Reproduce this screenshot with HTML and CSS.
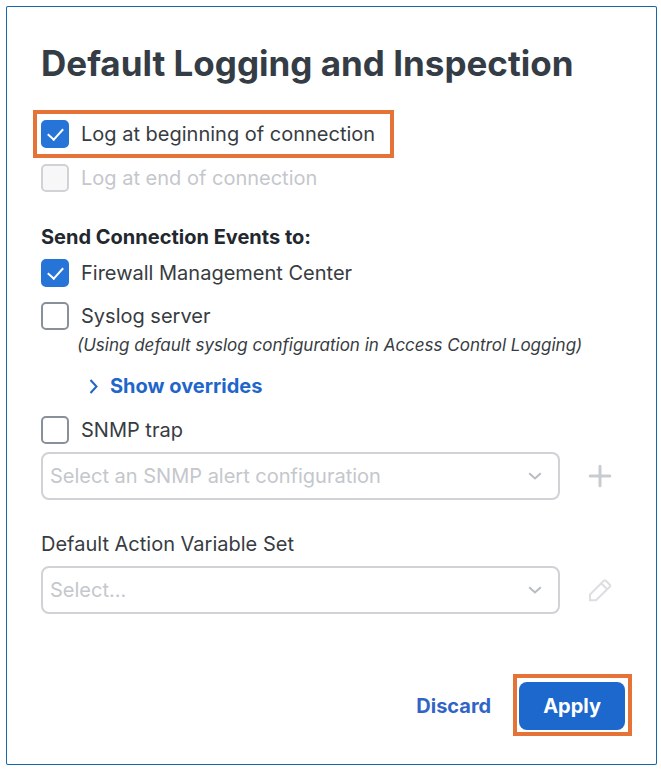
FILE: index.html
```html
<!DOCTYPE html>
<html lang="en">
<head>
    <meta charset="UTF-8">
    <meta name="viewport" content="width=device-width, initial-scale=1.0">
    <title>Default Logging and Inspection</title>
    <link rel="stylesheet" href="styles.css">
</head>
<body>
    <form class="dialog">
        <h1>Default Logging and Inspection</h1>

        <div class="highlight highlight-option">
            <label class="option"><input type="checkbox" checked> <span>Log at beginning of connection</span></label>
        </div>
        <label class="option disabled"><input type="checkbox" disabled> <span>Log at end of connection</span></label>

        <h2>Send Connection Events to:</h2>
        <label class="option"><input type="checkbox" checked> <span>Firewall Management Center</span></label>
        <label class="option syslog"><input type="checkbox"> <span>Syslog server</span></label>
        <p class="note">(Using default syslog configuration in Access Control Logging)</p>
        <button type="button" class="overrides">
            <svg width="10" height="16" viewBox="0 0 10 16"><path d="M1.5 2l6 6.5-6 6.5"/></svg>
            Show overrides
        </button>

        <label class="option"><input type="checkbox"> <span>SNMP trap</span></label>
        <div class="field snmp">
            <div class="select">
                <select aria-label="SNMP alert configuration" disabled>
                    <option>Select an SNMP alert configuration</option>
                </select>
                <svg width="14" height="8" viewBox="0 0 14 8"><path d="M1.2 1.2L7 6.5l5.8-5.3"/></svg>
            </div>
            <button type="button" class="icon" aria-label="Add" disabled>
                <svg width="24" height="24" viewBox="0 0 24 24"><path d="M12 2.2v19.6M2.2 12h19.6"/></svg>
            </button>
        </div>

        <label class="field-label" for="variableSet">Default Action Variable Set</label>
        <div class="field">
            <div class="select">
                <select id="variableSet" disabled>
                    <option>Select...</option>
                </select>
                <svg width="14" height="8" viewBox="0 0 14 8"><path d="M1.2 1.2L7 6.5l5.8-5.3"/></svg>
            </div>
            <button type="button" class="icon edit" aria-label="Edit" disabled>
                <svg width="24" height="24" viewBox="0 0 24 24"><path d="M2 16.5L15.8 2.7q1-1 2 0l4 4q1 1 0 2L8 22.3H2zM13.2 5.3l6 6"/></svg>
            </button>
        </div>

        <div class="actions">
            <button type="button" class="discard">Discard</button>
            <div class="highlight highlight-apply">
                <button type="button" class="apply">Apply</button>
            </div>
        </div>
    </form>
</body>
</html>
```
FILE: styles.css
```css
* {
    box-sizing: border-box;
}
body {
    margin: 6px 4px 6px 6px;
    background: #fff;
    color: #373c42;
    font: 20px/24px Inter, "Liberation Sans", sans-serif;
}
.dialog {
    padding: 34px 24px 28px 34px;
    border: 1px solid #1768aa;
    border-radius: 2px;
    box-shadow: 0 0 0 1px #9bcdec;
}
h1 {
    margin: 0 0 25px;
    font-size: 35px;
    line-height: 44px;
    font-weight: 700;
    color: #343c46;
    white-space: nowrap;
}
h2 {
    margin: 33px 0 10px;
    font-size: 20px;
    line-height: 24px;
    font-weight: 700;
    color: #23282e;
}
.highlight {
    border: 4px solid #e57236;
}
.highlight-option {
    width: fit-content;
    margin: 0 0 6px -8px;
    padding: 6px 15px 6px 4px;
}
.option {
    display: flex;
    align-items: center;
    gap: 12px;
}
.option input {
    appearance: none;
    display: grid;
    place-items: center;
    flex: none;
    width: 28px;
    height: 28px;
    margin: 0;
    border: 2px solid #889099;
    border-radius: 5px;
    background: #fff;
}
.option input:checked {
    border-color: #2774d9;
    background: #2774d9;
}
.option input:checked::before {
    content: "";
    width: 7px;
    height: 13px;
    margin-bottom: 4px;
    border: solid #fff;
    border-width: 0 2px 2px 0;
    transform: rotate(42deg);
}
.option input:disabled {
    border-color: #d0d2d6;
    background: #f7f7f8;
}
.disabled {
    color: #c4c7cc;
}
.syslog {
    margin-top: 15px;
}
.note {
    margin: 5px 0 19px 36px;
    font-size: 17px;
    line-height: 20px;
    font-style: italic;
    white-space: nowrap;
}
button {
    padding: 0;
    border: 0;
    background: none;
    font: inherit;
    font-weight: 700;
    cursor: pointer;
}
.overrides {
    display: flex;
    align-items: center;
    gap: 11px;
    margin: 0 0 18px 48px;
    color: #1f66cb;
}
svg {
    display: block;
    fill: none;
    stroke: currentColor;
    stroke-width: 2;
}
.field {
    display: flex;
    align-items: center;
    gap: 28px;
    padding-right: 20px;
}
.snmp {
    margin: 8px 0 32px;
}
.select {
    display: grid;
    flex: 1;
    align-items: center;
    color: #c4c7cc;
}
.select select,
.select svg {
    grid-area: 1 / 1;
}
.select svg {
    justify-self: end;
    margin-right: 18px;
    color: #b8bcc2;
    pointer-events: none;
}
select {
    appearance: none;
    width: 100%;
    height: 48px;
    padding: 0 7px;
    border: 2px solid #d0d2d6;
    border-radius: 8px;
    background: #fff;
    color: inherit;
    font: inherit;
    opacity: 1;
}
.icon {
    color: #c8cbd0;
}
.icon svg {
    stroke-width: 3;
    stroke-linecap: round;
}
.edit {
    color: #dcdee1;
}
.edit svg {
    stroke-width: 2;
}
.field-label {
    display: block;
    margin-bottom: 10px;
}
.actions {
    display: flex;
    justify-content: flex-end;
    align-items: baseline;
    gap: 22px;
    margin-top: 60px;
}
.discard {
    color: #3065c6;
}
.highlight-apply {
    padding: 4px 3px 2px 2px;
}
.apply {
    display: block;
    height: 48px;
    padding: 0 24px;
    border-radius: 8px;
    background: #1d68cd;
    color: #fff;
}
```
